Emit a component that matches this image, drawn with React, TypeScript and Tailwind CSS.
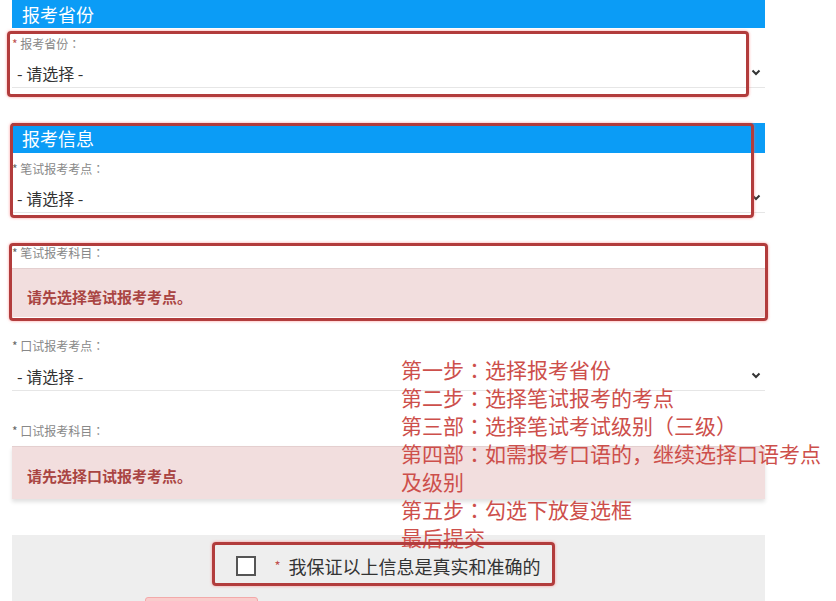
import React from "react";

const Chevron = () => (
  <svg width="10" height="7" viewBox="0 0 10 7" className="shrink-0">
    <path d="M1.5 1.5 L5 5 L8.5 1.5" fill="none" stroke="#333" strokeWidth="2" />
  </svg>
);

// full-width colon, centred like the reference
const Colon = () => <span className="font-['Noto_Sans_CJK_JP',sans-serif]">：</span>;

const Label = ({ text, redStar = false, className = "" }: { text: string; redStar?: boolean; className?: string }) => (
  <div className={`h-[14px] text-[12px] leading-[14px] text-[#888] ${className}`}>
    <span className={redStar ? "text-[#c0504d]" : "text-[#666]"}>*</span> {text}
    <Colon />
  </div>
);

const SelectBox = ({ className = "" }: { className?: string }) => (
  <div className={`flex h-[30px] items-center justify-between border-b border-[#e6e6e6] pl-[5px] pr-[4px] ${className}`}>
    <span className="text-[16px] text-[#333]">- 请选择 -</span>
    <Chevron />
  </div>
);

const Alert = ({ text, className = "" }: { text: string; className?: string }) => (
  <div className={`border-t border-[#e4cfcf] bg-[#f2dede] pl-[15px] text-[15px] font-bold leading-[16px] text-[#a94442] ${className}`}>
    {text}
  </div>
);

const RedBox = ({ className }: { className: string }) => (
  <div
    className={`pointer-events-none absolute rounded-[4px] border-[3px] border-[#b23c3c] shadow-[0_0_3px_rgba(255,110,110,0.7)] ${className}`}
  />
);

const steps: [string, string][] = [
  ["第一步", "选择报考省份"],
  ["第二步", "选择笔试报考的考点"],
  ["第三部", "选择笔试考试级别（三级）"],
  ["第四部", "如需报考口语的，继续选择口语考点及级别"],
  ["第五步", "勾选下放复选框"],
];

export default function App() {
  return (
    <div className="relative h-[601px] w-[836px] overflow-hidden bg-white font-['Noto_Sans_CJK_SC','Microsoft_YaHei',sans-serif]">
      <div className="ml-[12px] flex w-[753px] flex-col">
        {/* 报考省份 */}
        <div className="flex h-[28px] items-center bg-[#0b9cf6] pl-[10px] text-[18px] text-white">报考省份</div>
        <Label text="报考省份" redStar className="mt-[9px]" />
        <SelectBox className="mt-[7px]" />

        {/* 报考信息 */}
        <div className="mt-[35px] flex h-[30px] items-center bg-[#0b9cf6] pl-[10px] text-[18px] text-white">报考信息</div>
        <Label text="笔试报考考点" className="mt-[9px]" />
        <SelectBox className="mt-[7px]" />

        <Label text="笔试报考科目" className="mt-[33px]" />
        <Alert text="请先选择笔试报考考点。" className="mt-[8px] h-[49px] pt-[20px]" />

        <Label text="口试报考考点" className="mt-[22px]" />
        <SelectBox className="mt-[8px]" />

        <Label text="口试报考科目" className="mt-[33px]" />
        <Alert
          text="请先选择口试报考考点。"
          className="mt-[8px] h-[53px] pt-[21px] shadow-[0_3px_4px_rgba(0,0,0,0.12)]"
        />

        {/* 确认 */}
        <div className="mt-[36px] h-[80px] bg-[#eeeeee] pt-[9px]">
          <div className="flex h-[44px] items-center justify-center">
            <span className="h-[20px] w-[20px] border-2 border-[#555] bg-white" />
            <span className="ml-[18px] text-[13px] text-[#c0504d]">*</span>
            <span className="ml-[8px] text-[18px] text-[#333]">我保证以上信息是真实和准确的</span>
          </div>
          <div className="ml-[133px] mt-[9px] h-[34px] w-[113px] rounded-[3px] border border-[#f3a9a9] bg-[#f9cccc]" />
        </div>
      </div>

      {/* annotation */}
      <div className="absolute left-[401px] top-[355px] w-[425px] text-[21px] leading-[28px] text-[#cd4f4b]">
        {steps.map(([a, b]) => (
          <div key={a}>
            {a}
            <Colon />
            {b}
          </div>
        ))}
        <div>最后提交</div>
      </div>

      <RedBox className="left-[7px] top-[31px] h-[66px] w-[742px]" />
      <RedBox className="left-[10px] top-[123px] h-[95px] w-[744px]" />
      <RedBox className="left-[9px] top-[243px] h-[78px] w-[759px]" />
      <RedBox className="left-[212px] top-[542px] h-[44px] w-[343px]" />
    </div>
  );
}
